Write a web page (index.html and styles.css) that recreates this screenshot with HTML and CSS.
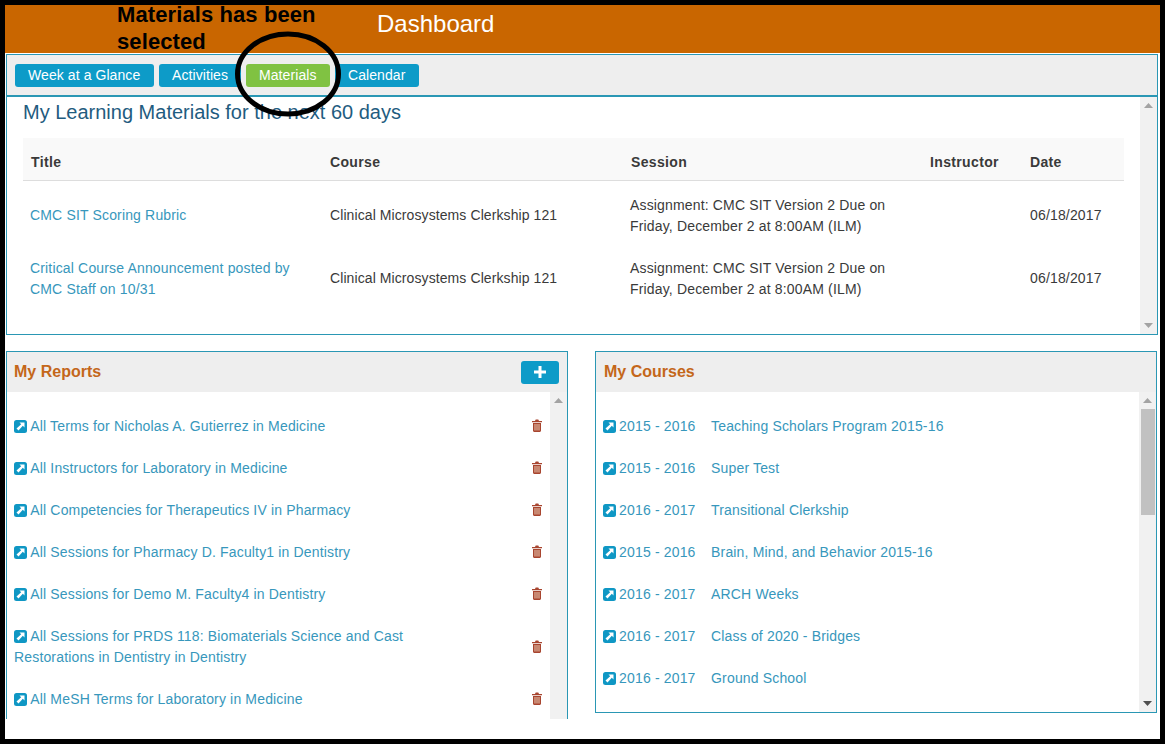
FILE: index.html
```html
<!DOCTYPE html>
<html lang="en">
<head>
<meta charset="utf-8">
<title>Dashboard</title>
<link rel="stylesheet" href="styles.css">
</head>
<body>
<div class="frame">
  <header class="topbar">
    <div class="note">Materials has been selected</div>
    <div class="brand">Dashboard</div>
  </header>
  <nav class="tabs">
    <a class="tab">Week at a Glance</a>
    <a class="tab">Activities</a>
    <a class="tab tab-on">Materials</a>
    <a class="tab">Calendar</a>
  </nav>
  <section class="materials">
    <div class="materials-body">
      <h2 class="materials-title">My Learning Materials for the next 60 days</h2>
      <div class="table">
        <div class="row head">
          <div class="c1">Title</div><div class="c2">Course</div><div class="c3">Session</div><div class="c4">Instructor</div><div class="c5">Date</div>
        </div>
        <div class="row">
          <div class="c1 link">CMC SIT Scoring Rubric</div>
          <div class="c2">Clinical Microsystems Clerkship 121</div>
          <div class="c3">Assignment: CMC SIT Version 2 Due on Friday, December 2 at 8:00AM (ILM)</div>
          <div class="c4"></div>
          <div class="c5">06/18/2017</div>
        </div>
        <div class="row">
          <div class="c1 link">Critical Course Announcement posted by CMC Staff on 10/31</div>
          <div class="c2">Clinical Microsystems Clerkship 121</div>
          <div class="c3">Assignment: CMC SIT Version 2 Due on Friday, December 2 at 8:00AM (ILM)</div>
          <div class="c4"></div>
          <div class="c5">06/18/2017</div>
        </div>
      </div>
    </div>
    <div class="sb">
      <svg class="arrow" viewBox="0 0 9 5"><path class="arrow-off" d="M4.500 0 9 5H0z"/></svg>
      <svg class="arrow" viewBox="0 0 9 5"><path class="arrow-off" d="M0 0h9L4.500 5z"/></svg>
    </div>
  </section>
  <div class="columns">
    <section class="card card-left">
      <div class="card-head">
        <h3>My Reports</h3>
        <button class="add" aria-label="Add"><svg viewBox="0 0 12 12" width="12" height="12"><path d="M4.500 0h3v4.500H12v3H7.500V12h-3V7.500H0v-3h4.500z" fill="#fff"/></svg></button>
      </div>
      <div class="card-body">
        <ul class="list">
          <li class="item"><span class="item-text"><svg class="ext" viewBox="0 0 13 13"><use href="#ext"/></svg> All Terms for Nicholas A. Gutierrez in Medicine</span><svg class="trash" viewBox="0 0 12 13"><use href="#trash"/></svg></li>
          <li class="item"><span class="item-text"><svg class="ext" viewBox="0 0 13 13"><use href="#ext"/></svg> All Instructors for Laboratory in Medicine</span><svg class="trash" viewBox="0 0 12 13"><use href="#trash"/></svg></li>
          <li class="item"><span class="item-text"><svg class="ext" viewBox="0 0 13 13"><use href="#ext"/></svg> All Competencies for Therapeutics IV in Pharmacy</span><svg class="trash" viewBox="0 0 12 13"><use href="#trash"/></svg></li>
          <li class="item"><span class="item-text"><svg class="ext" viewBox="0 0 13 13"><use href="#ext"/></svg> All Sessions for Pharmacy D. Faculty1 in Dentistry</span><svg class="trash" viewBox="0 0 12 13"><use href="#trash"/></svg></li>
          <li class="item"><span class="item-text"><svg class="ext" viewBox="0 0 13 13"><use href="#ext"/></svg> All Sessions for Demo M. Faculty4 in Dentistry</span><svg class="trash" viewBox="0 0 12 13"><use href="#trash"/></svg></li>
          <li class="item item-tall"><span class="item-text"><svg class="ext" viewBox="0 0 13 13"><use href="#ext"/></svg> All Sessions for PRDS 118: Biomaterials Science and Cast Restorations in Dentistry in Dentistry</span><svg class="trash" viewBox="0 0 12 13"><use href="#trash"/></svg></li>
          <li class="item"><span class="item-text"><svg class="ext" viewBox="0 0 13 13"><use href="#ext"/></svg> All MeSH Terms for Laboratory in Medicine</span><svg class="trash" viewBox="0 0 12 13"><use href="#trash"/></svg></li>
        </ul>
        <div class="sb">
          <svg class="arrow" viewBox="0 0 9 5"><path class="arrow-off" d="M4.500 0 9 5H0z"/></svg>
        </div>
      </div>
    </section>
    <section class="card card-right">
      <div class="card-head"><h3>My Courses</h3></div>
      <div class="card-body">
        <ul class="list">
          <li class="item"><span class="item-text"><svg class="ext" viewBox="0 0 13 13"><use href="#ext"/></svg> <span class="term">2015 - 2016</span>Teaching Scholars Program 2015-16</span></li>
          <li class="item"><span class="item-text"><svg class="ext" viewBox="0 0 13 13"><use href="#ext"/></svg> <span class="term">2015 - 2016</span>Super Test</span></li>
          <li class="item"><span class="item-text"><svg class="ext" viewBox="0 0 13 13"><use href="#ext"/></svg> <span class="term">2016 - 2017</span>Transitional Clerkship</span></li>
          <li class="item"><span class="item-text"><svg class="ext" viewBox="0 0 13 13"><use href="#ext"/></svg> <span class="term">2015 - 2016</span>Brain, Mind, and Behavior 2015-16</span></li>
          <li class="item"><span class="item-text"><svg class="ext" viewBox="0 0 13 13"><use href="#ext"/></svg> <span class="term">2016 - 2017</span>ARCH Weeks</span></li>
          <li class="item"><span class="item-text"><svg class="ext" viewBox="0 0 13 13"><use href="#ext"/></svg> <span class="term">2016 - 2017</span>Class of 2020 - Bridges</span></li>
          <li class="item"><span class="item-text"><svg class="ext" viewBox="0 0 13 13"><use href="#ext"/></svg> <span class="term">2016 - 2017</span>Ground School</span></li>
        </ul>
        <div class="sb">
          <svg class="arrow" viewBox="0 0 9 5"><path class="arrow-off" d="M4.500 0 9 5H0z"/></svg>
          <div class="thumb"></div>
          <svg class="arrow arrow-last" viewBox="0 0 9 5"><path class="arrow-on" d="M0 0h9L4.500 5z"/></svg>
        </div>
      </div>
    </section>
  </div>
  <svg class="circle" viewBox="0 0 110 90"><ellipse cx="55" cy="45" rx="50.500" ry="40" fill="none" stroke="#000" stroke-width="5"/></svg>
</div>
<svg width="0" height="0" class="defs">
  <symbol id="ext" viewBox="0 0 13 13">
    <rect width="13" height="13" rx="2.500" fill="#0f97c4"/>
    <path d="M5.500 2.500h5v5L8.800 5.800 4.500 10.500 2.500 8.500 7.200 4.200z" fill="#fff"/>
  </symbol>
  <symbol id="trash" viewBox="0 0 12 13">
    <path d="M4 2 4.700.5h2.600L8 2h3v1.200H1V2zM2 4h8v7.600c0 .8-.5 1.400-1.200 1.400H3.200C2.500 13 2 12.400 2 11.600z" fill="#a8452f"/>
    <path d="M3.500 5v6.500h1V5zM5.500 5v6.500h1V5zM7.500 5v6.500h1V5z" fill="#e9cdb6"/>
  </symbol>
</svg>
</body>
</html>
```
FILE: styles.css
```css
* { box-sizing: border-box; }
html, body { margin: 0; padding: 0; background: #fff; }
body { font-family: "Liberation Sans", Arial, sans-serif; font-size: 14px; color: #3a3a3a; letter-spacing: .16px; }
.frame { position: relative; width: 1165px; height: 744px; border: 5px solid #000; overflow: hidden; background: #fff; display: flex; flex-direction: column; }
.defs { position: absolute; }
.topbar { height: 48px; background: #c96600; display: flex; flex: none; padding-left: 112px; }
.note { width: 260px; font-size: 22px; font-weight: 700; line-height: 27px; color: #000; letter-spacing: .1px; margin-top: -4px; }
.brand { font-size: 24px; color: #fff; line-height: 37px; letter-spacing: 0; }
.tabs { flex: none; margin: 1px 2px 0 1px; height: 43px; background: #eee; border: 1px solid #2a97b4; border-bottom-width: 2px; display: flex; gap: 5px; padding: 9px 0 0 8px; align-items: flex-start; }
.tab { height: 23px; line-height: 23px; padding: 0 13px; background: #0d9bc8; color: #fff; font-size: 14px; border-radius: 3px; white-space: nowrap; letter-spacing: .08px; }
.tab-on { background: #80c242; }
.tab:nth-child(1) { width: 139px; }
.tab:nth-child(2) { width: 82px; }
.tab:nth-child(3) { width: 84px; }
.tab:nth-child(4) { width: 84px; }
.materials { flex: none; height: 238px; margin: 0 2px 0 1px; border: 1px solid #2a97b4; border-top: 0; display: flex; }
.materials-body { flex: 1; padding: 0 16px; min-width: 0; }
.materials-title { margin: 3px 0 14px; font-size: 20px; font-weight: 400; line-height: 24px; color: #1f5c80; letter-spacing: 0; }
.table { display: flex; flex-direction: column; width: 1101px; }
.row { display: grid; grid-template-columns: 300px 300px 300px 100px 101px; align-items: center; height: 63px; line-height: 21px; }
.row > div { padding-left: 7px; padding-right: 30px; }
.row > .c2 { letter-spacing: .09px; padding-right: 0; }
.row > .c5 { padding-right: 0; }
.head { height: 43px; background: #f9f9f9; border-bottom: 1px solid #ddd; font-weight: 700; margin-bottom: 3px; padding-top: 7px; letter-spacing: .35px; }
.row.head > .c2 { letter-spacing: .35px; }
.head > .c1, .head > .c3 { padding-left: 8px; }
.link { color: #3797bc; }
.sb { flex: none; width: 17px; background: #f1f1f1; display: flex; flex-direction: column; align-items: center; justify-content: space-between; padding: 6px 0 6px; }
.arrow { width: 9px; height: 5px; display: block; flex: none; }
.arrow-off { fill: #a3a3a3; }
.arrow-on { fill: #505050; }
.arrow-last { margin-top: auto; }
.thumb { width: 14px; height: 106px; background: #c1c1c1; margin-top: 6px; flex: none; }
.columns { flex: 1; display: flex; padding: 16px 3px 0 1px; justify-content: space-between; align-items: flex-start; min-height: 0; }
.card { width: 562px; border: 1px solid #2a97b4; display: flex; flex-direction: column; background: #fff; }
.card-left { border-bottom: 0; height: 368px; overflow: hidden; }
.card-right { height: 362px; }
.card-head { flex: none; height: 40px; background: #eee; display: flex; align-items: center; justify-content: space-between; padding: 0 8px; }
.card-left .card-head { padding-left: 7px; }
.card-head h3 { margin: 0; font-size: 16px; font-weight: 700; color: #c4671a; letter-spacing: 0; }
.add { width: 38px; height: 23px; border: 0; border-radius: 3px; background: #0d9bc8; padding: 0; display: flex; align-items: center; justify-content: center; }
.card-body { flex: 1; display: flex; min-height: 0; }
.list { flex: 1; list-style: none; margin: 0; padding: 13px 0 0 7px; min-width: 0; }
.item { display: flex; align-items: center; justify-content: space-between; min-height: 42px; padding: 0 7px 0 0; color: #3797bc; line-height: 21px; }
.item-tall { min-height: 63px; }
.item-text { display: block; flex: 1; max-width: 450px; }
.ext { width: 13px; height: 13px; vertical-align: -2px; margin-right: -1px; }
.card-left .ext { margin-right: 0; }
.term { display: inline-block; width: 92px; }
.trash { width: 12px; height: 13px; flex: none; margin-bottom: 1px; }
.circle { position: absolute; left: 228px; top: 24px; width: 110px; height: 90px; }
```
